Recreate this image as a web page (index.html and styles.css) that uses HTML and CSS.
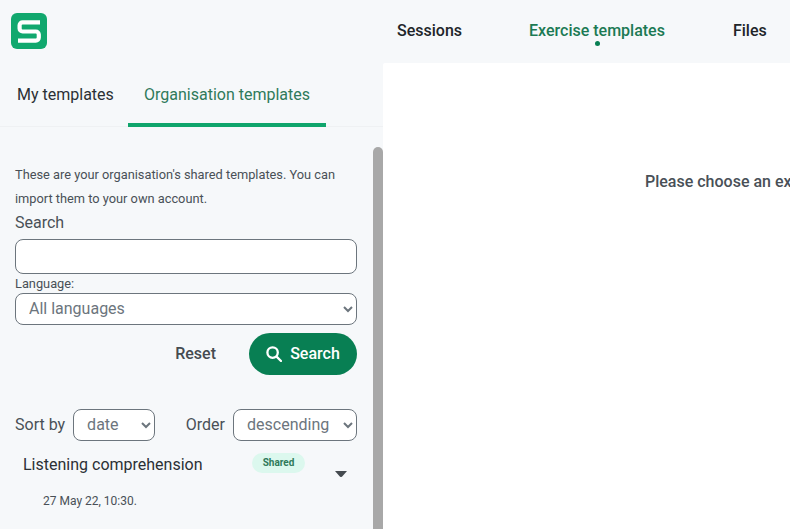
FILE: index.html
```html
<!DOCTYPE html>
<html lang="en">
<head>
<meta charset="utf-8">
<title>Exercise templates</title>
<link rel="stylesheet" href="styles.css">
</head>
<body>
<header class="topbar">
  <div class="brand">
    <svg class="logo" width="36" height="36" viewBox="0 0 36 36" aria-label="Logo">
      <rect width="36" height="36" rx="6" fill="#11a86e"/>
      <path d="M29 9.3H11.6a3 3 0 0 0-3 3v3.2a3 3 0 0 0 3 3h13.2a3 3 0 0 1 3 3v3.1a3 3 0 0 1-3 3H7" fill="none" stroke="#fff" stroke-width="4.2"/>
    </svg>
  </div>
  <nav class="mainnav">
    <a class="navlink">Sessions</a>
    <a class="navlink navlink-active">Exercise templates</a>
    <a class="navlink">Files</a>
  </nav>
</header>
<div class="body">
  <aside class="sidebar">
    <div class="tabs">
      <a class="tab">My templates</a>
      <a class="tab tab-active">Organisation templates</a>
    </div>
    <div class="panelwrap">
      <div class="panel">
        <p class="intro">These are your organisation's shared templates. You can import them to your own account.</p>
        <label class="label">Search</label>
        <input class="textinput" type="text">
        <label class="label-small">Language:</label>
        <select class="select select-wide"><option>All languages</option></select>
        <div class="actions">
          <button class="btn-reset" type="button">Reset</button>
          <button class="btn-search" type="button">
            <svg width="16" height="16" viewBox="0 0 16 16" fill="none" stroke="#fff" stroke-width="2.3"><circle cx="6.6" cy="6.6" r="5.2"/><path d="M10.6 10.6l4.4 4.4" stroke-linecap="round"/></svg>
            <span class="btn-text">Search</span>
          </button>
        </div>
        <div class="sortrow">
          <div class="sortgroup">
            <label class="sortlabel">Sort by</label>
            <select class="select select-date"><option>date</option></select>
          </div>
          <div class="sortgroup">
            <label class="sortlabel">Order</label>
            <select class="select select-order"><option>descending</option></select>
          </div>
        </div>
        <div class="item">
          <div class="itemhead">
            <span class="itemtitle">Listening comprehension</span>
            <span class="badge">Shared</span>
            <svg class="caret" width="12" height="6" viewBox="0 0 12 6"><path d="M0 0h12L7.2 5.4a1.6 1.6 0 0 1-2.4 0z" fill="#454b50"/></svg>
          </div>
          <div class="itemdate">27 May 22, 10:30.</div>
        </div>
      </div>
      <div class="scrollbar"></div>
    </div>
  </aside>
  <main class="content">
    <p class="placeholder">Please choose an exercise template</p>
  </main>
</div>
</body>
</html>
```
FILE: styles.css
```css
* { box-sizing: border-box; }
html, body { margin: 0; height: 100%; overflow: hidden; }
body {
  background: #f6f8fa;
  font-family: Roboto, "Liberation Sans", sans-serif;
  color: #212529;
  display: flex;
  flex-direction: column;
}
.topbar { height: 63px; display: flex; flex: none; }
.brand { width: 383px; padding: 13px 0 0 11px; }
.logo { display: block; }
.mainnav { display: flex; gap: 67px; padding: 21px 0 0 14px; white-space: nowrap; }
.navlink { font-size: 16px; font-weight: 500; line-height: 19px; color: #212529; position: relative; height: 19px; }
.navlink-active { color: #1c7a54; margin-right: 1px; }
.navlink-active::after {
  content: "";
  position: absolute;
  left: 50%;
  top: 20px;
  width: 5px;
  height: 5px;
  margin-left: -2px;
  border-radius: 50%;
  background: #087f53;
}
.body { flex: 1; display: flex; min-height: 0; }
.sidebar { width: 383px; flex: none; display: flex; flex-direction: column; min-height: 0; }
.tabs {
  height: 64px;
  flex: none;
  display: flex;
  padding-right: 10px;
  border-bottom: 1px solid #eff1f3;
}
.tab { font-size: 16px; line-height: 19px; padding: 22px 15px 0 17px; color: #2b3035; width: 128px; white-space: nowrap; }
.tab-active { width: 198px; height: 64px; padding-left: 16px; color: #2f7a5a; border-bottom: 4px solid #10a56c; }
.panelwrap { flex: 1; display: flex; min-height: 0; overflow: hidden; }
.panel { width: 373px; flex: none; padding: 36px 16px 0 15px; }
.scrollbar { width: 10px; margin-top: 20px; background: #a8a8a8; border-radius: 5px 5px 0 0; }
.intro { margin: 0; font-size: 12.8px; line-height: 24px; color: #495057; }
.label { display: block; font-size: 16px; line-height: 24px; color: #495057; }
.label-small { display: block; font-size: 12.8px; line-height: 19px; color: #495057; }
.textinput {
  display: block;
  width: 100%;
  height: 35px;
  margin-top: 4px;
  border: 1px solid #6c757d;
  border-radius: 8px;
  background: #fff;
}
.select {
  font-family: inherit;
  font-size: 16px;
  color: #6c757d;
  height: 32px;
  border: 1px solid #6c757d;
  border-radius: 8px;
  background: #fff;
  padding: 0 0 2px 9px;
}
.select-wide { display: block; width: 100%; }
.select-date { width: 82px; }
.select-order { width: 124px; }
.actions { display: flex; justify-content: flex-end; align-items: center; gap: 33px; margin-top: 8px; }
.btn-reset { border: 0; background: none; padding: 0 0 2px; font: 500 16px/19px Roboto, sans-serif; color: #454b50; }
.btn-search {
  width: 108px;
  height: 42px;
  border: 0;
  border-radius: 21px;
  background: #087f53;
  color: #fff;
  font: 500 16px/19px Roboto, sans-serif;
  display: flex;
  align-items: center;
  justify-content: center;
  gap: 8px;
}
.btn-text { padding-bottom: 2px; }
.sortrow { display: flex; justify-content: space-between; margin-top: 34px; }
.sortgroup { display: flex; align-items: center; gap: 8px; }
.sortlabel { font-size: 16px; color: #495057; padding-bottom: 2px; }
.item { padding: 0 0 0 8px; }
.itemhead { display: flex; position: relative; height: 37px; padding-top: 14px; }
.itemtitle { font-size: 16px; line-height: 19px; color: #2b3035; width: 229px; }
.badge {
  position: absolute;
  left: 229px;
  top: 12px;
  width: 53px;
  height: 20px;
  border-radius: 10px;
  background: #dcf8ee;
  color: #2f7a5a;
  font-size: 10px;
  font-weight: 700;
  line-height: 19px;
  text-align: center;
}
.caret { position: absolute; left: 312px; top: 30px; }
.itemdate { font-size: 12px; line-height: 16px; color: #495057; padding: 15px 0 0 20px; }
.content { flex: 1; background: #fff; min-width: 0; overflow: hidden; padding: 109px 0 0 262px; border-top-left-radius: 2px; }
.placeholder { margin: 0; font-size: 16px; font-weight: 500; line-height: 19px; color: #495057; white-space: nowrap; }
```
